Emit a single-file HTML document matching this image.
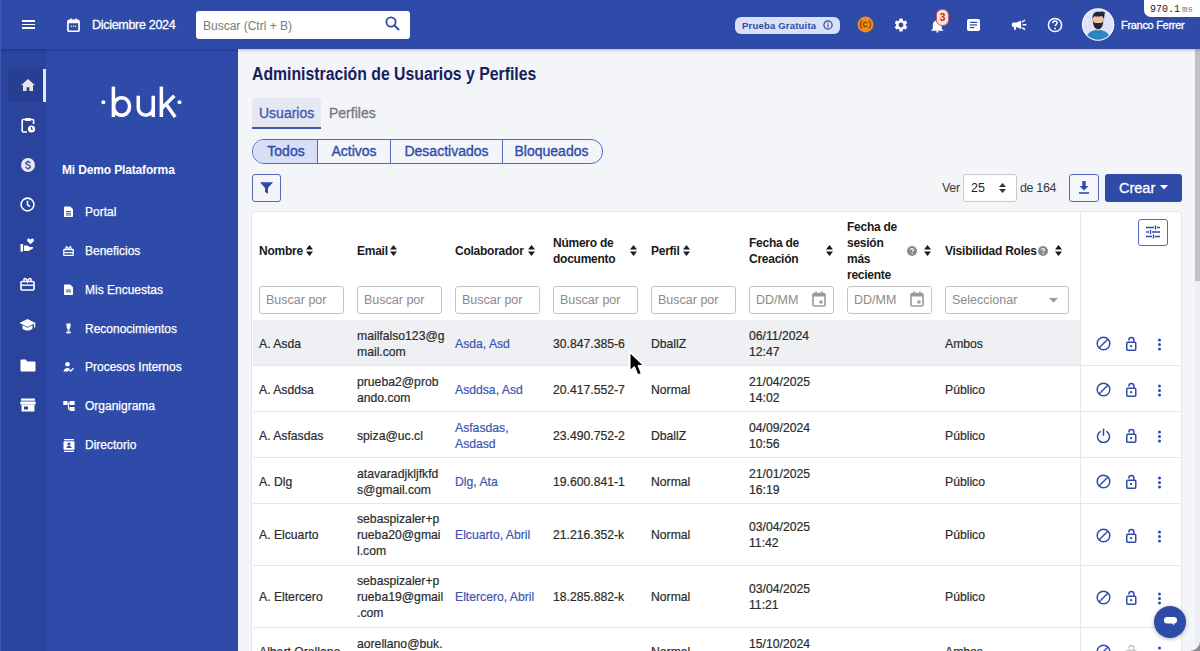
<!DOCTYPE html>
<html><head><meta charset="utf-8">
<style>
*{box-sizing:border-box;margin:0;padding:0}
html,body{width:1200px;height:651px;overflow:hidden;background:#F4F5F8;font-family:"Liberation Sans",sans-serif;color:#2b2b2b}
.abs{position:absolute}
#hdr{position:absolute;left:0;top:0;width:1200px;height:49px;background:#2F4BAA;box-shadow:0 1px 3px rgba(0,0,0,.25);z-index:5}
#rail{position:absolute;left:0;top:49px;width:46px;height:602px;background:#2A449E}
#side{position:absolute;left:46px;top:49px;width:192px;height:602px;background:#2F4BAA}
.wt{color:#fff}
.med{-webkit-text-stroke:0.3px currentColor}
svg{display:block}
</style></head><body>

<!-- HEADER -->
<div id="hdr">
  <!-- hamburger -->
  <div class="abs" style="left:21.5px;top:20px;width:13px;height:1.8px;background:#fff"></div>
  <div class="abs" style="left:21.5px;top:23.5px;width:13px;height:1.8px;background:#fff"></div>
  <div class="abs" style="left:21.5px;top:27px;width:13px;height:1.8px;background:#fff"></div>
  <!-- calendar -->
  <svg class="abs" style="left:67px;top:17.5px" width="13" height="14.3" viewBox="0 0 14 15" preserveAspectRatio="none">
    <rect x="1" y="2.5" width="12" height="11.5" rx="1.5" fill="none" stroke="#fff" stroke-width="1.8"/>
    <rect x="1" y="2.5" width="12" height="3" fill="#fff"/>
    <rect x="3.5" y="0.5" width="1.6" height="3" fill="#fff"/>
    <rect x="8.9" y="0.5" width="1.6" height="3" fill="#fff"/>
    <rect x="4" y="8" width="1.3" height="1.3" fill="#fff"/><rect x="6.4" y="8" width="1.3" height="1.3" fill="#fff"/><rect x="8.8" y="8" width="1.3" height="1.3" fill="#fff"/>
  </svg>
  <div class="abs wt" style="left:92px;top:17px;font-size:12.5px;line-height:16px;letter-spacing:-0.3px;-webkit-text-stroke:0.3px #fff">Diciembre 2024</div>
  <!-- search -->
  <div class="abs" style="left:196px;top:11px;width:214px;height:28px;background:#fff;border-radius:3px"></div>
  <div class="abs" style="left:203px;top:18.0px;font-size:12px;line-height:16px;color:#7a7a7a">Buscar (Ctrl + B)</div>
  <svg class="abs" style="left:385px;top:16px" width="15" height="15" viewBox="0 0 15 15">
    <circle cx="6" cy="6" r="4.6" fill="none" stroke="#2F4BAA" stroke-width="1.8"/>
    <line x1="9.4" y1="9.4" x2="13.5" y2="13.5" stroke="#2F4BAA" stroke-width="2" stroke-linecap="round"/>
  </svg>
  <!-- Prueba gratuita -->
  <div class="abs" style="left:735px;top:17px;width:105px;height:17px;background:#DAE0F6;border-radius:6px"></div>
  <div class="abs" style="left:742px;top:18.5px;font-size:9.5px;line-height:13px;font-weight:bold;color:#2E4AA6;letter-spacing:0.2px">Prueba Gratuita</div>
  <svg class="abs" style="left:823px;top:20px" width="10" height="10" viewBox="0 0 10 10">
    <circle cx="5" cy="5" r="4.1" fill="none" stroke="#2F4BAA" stroke-width="1.2"/>
    <rect x="4.45" y="4.2" width="1.1" height="3.3" fill="#2F4BAA"/><rect x="4.45" y="2.3" width="1.1" height="1.1" fill="#2F4BAA"/>
  </svg>
  <!-- orange -->
  <svg class="abs" style="left:857.1px;top:16px" width="17" height="17" viewBox="0 0 17 17">
    <circle cx="8.5" cy="8.5" r="7.9" fill="#F68A12"/>
    <path d="M5.2 4.6 A5 5 0 0 0 5.2 12.4" fill="none" stroke="#8C4A12" stroke-width="1.3"/>
    <path d="M11.8 4.6 A5 5 0 0 1 11.8 12.4" fill="none" stroke="#8C4A12" stroke-width="1.3"/>
    <path d="M10.3 7.2A2.2 2.2 0 1 0 10.3 9.8" fill="none" stroke="#8C4A12" stroke-width="1.5"/>
  </svg>
  <!-- gear -->
  <svg class="abs" style="left:893.4px;top:16.5px" width="16" height="16" viewBox="0 0 24 24">
    <path fill="#fff" d="M19.14 12.94c.04-.3.06-.61.06-.94 0-.32-.02-.64-.07-.94l2.03-1.58a.49.49 0 0 0 .12-.61l-1.92-3.32a.488.488 0 0 0-.59-.22l-2.39.96c-.5-.38-1.03-.7-1.62-.94l-.36-2.54a.484.484 0 0 0-.48-.41h-3.84c-.24 0-.43.17-.47.41l-.36 2.54c-.59.24-1.13.57-1.62.94l-2.39-.96c-.22-.08-.47 0-.59.22L2.74 8.87c-.12.21-.08.47.12.61l2.03 1.58c-.05.3-.09.63-.09.94s.02.64.07.94l-2.03 1.58a.49.49 0 0 0-.12.61l1.92 3.32c.12.22.37.29.59.22l2.39-.96c.5.38 1.03.7 1.62.94l.36 2.54c.05.24.24.41.48.41h3.84c.24 0 .44-.17.47-.41l.36-2.54c.59-.24 1.13-.56 1.62-.94l2.39.96c.22.08.47 0 .59-.22l1.92-3.32c.12-.22.07-.47-.12-.61l-2.01-1.58zM12 15.6c-1.98 0-3.6-1.62-3.6-3.6s1.62-3.6 3.6-3.6 3.6 1.62 3.6 3.6-1.62 3.6-3.6 3.6z"/>
  </svg>
  <!-- bell -->
  <svg class="abs" style="left:931.3px;top:18.5px" width="12.5" height="14" viewBox="0 0 14 16" preserveAspectRatio="none">
    <path fill="#fff" d="M7 15.5c.9 0 1.6-.7 1.6-1.6H5.4c0 .9.7 1.6 1.6 1.6zM12 11V7c0-2.4-1.3-4.4-3.5-4.9V1.5C8.5.7 7.8 0 7 0S5.5.7 5.5 1.5v.6C3.3 2.6 2 4.6 2 7v4l-1.6 1.6v.8h13.2v-.8L12 11z"/>
  </svg>
  <div class="abs" style="left:936px;top:9px;width:13px;height:17px;background:#FBE1DA;border:1px solid #C95A4A;border-radius:6px;font-size:10px;font-weight:bold;color:#B0301F;text-align:center;line-height:16.5px">3</div>
  <!-- doc -->
  <svg class="abs" style="left:967px;top:18.7px" width="13" height="12" viewBox="0 0 13 13" preserveAspectRatio="none">
    <rect x="0" y="0" width="13" height="13" rx="1.8" fill="#fff"/>
    <rect x="2.8" y="3" width="7.4" height="1.3" fill="#2F4BAA"/><rect x="2.8" y="5.8" width="7.4" height="1.3" fill="#2F4BAA"/><rect x="2.8" y="8.6" width="4.6" height="1.3" fill="#2F4BAA"/>
  </svg>
  <!-- megaphone -->
  <svg class="abs" style="left:1011px;top:18px" width="16" height="14" viewBox="0 0 16 14">
    <path fill="#fff" d="M3 4.6H5.2L10.2 2.6V11L5.2 9H4.9L5.1 11.8H3L2.8 9A2.2 2.2 0 0 1 3 4.6Z"/>
    <path d="M11.6 3.8L13.6 2.3M12.2 6.8H14.8M11.6 9.9L13.6 11.4" stroke="#fff" stroke-width="1.4" stroke-linecap="round"/>
  </svg>
  <!-- help -->
  <svg class="abs" style="left:1047px;top:17px" width="16" height="16" viewBox="0 0 16 16">
    <circle cx="8" cy="8" r="6.6" fill="none" stroke="#fff" stroke-width="1.5"/>
    <path d="M5.9 6.2c0-1.3 1-2.1 2.1-2.1s2.1.8 2.1 1.9c0 1.5-2 1.6-2 3.1" fill="none" stroke="#fff" stroke-width="1.5"/>
    <circle cx="8.1" cy="11.4" r=".95" fill="#fff"/>
  </svg>
  <!-- avatar -->
  <svg class="abs" style="left:1081px;top:8px" width="34" height="34" viewBox="0 0 34 34">
    <defs><clipPath id="av"><circle cx="17.1" cy="16.5" r="15.2"/></clipPath></defs>
    <circle cx="17.1" cy="16.5" r="16.2" fill="#fff"/>
    <circle cx="17.1" cy="16.5" r="15.2" fill="#DEE4F5"/>
    <g clip-path="url(#av)">
      <path d="M4.5 34C5 26.5 8.5 22.3 17.1 21.8 25.7 22.3 29.2 26.5 29.7 34z" fill="#2C85C5"/>
      <path d="M14.5 22.2l2.6 2.6 2.6-2.6" fill="none" stroke="#1F6FA8" stroke-width=".8"/>
      <rect x="15.1" y="18.5" width="4" height="4" fill="#E5AE88"/>
      <circle cx="11.9" cy="12.3" r="1.3" fill="#F0BE9A"/><circle cx="22.3" cy="12.3" r="1.3" fill="#F0BE9A"/>
      <ellipse cx="17.1" cy="12.2" rx="5" ry="5.9" fill="#F2C3A0"/>
      <path d="M12 12.2C12 18.5 14 21 17.1 21S22.2 18.5 22.2 12.2C21.6 14.3 20.6 15.3 19.6 14.9H14.6C13.6 15.3 12.6 14.3 12 12.2z" fill="#1D2838"/>
      <path d="M11.7 11.2C11.1 6.3 13.4 3.6 17.4 3.8 19.4 3.6 21 4 22 3l.7 1.5 1.8-.8-1 2.3c.1 2-.3 3.9-.8 5.2-.5-1.8-1.1-2.8-2-3.3-2 .8-5.3.8-7.3.3-.8.7-1.3 1.8-1.7 3z" fill="#1D2838"/>
    </g>
  </svg>
  <div class="abs wt" style="left:1121px;top:18px;font-size:11px;line-height:14px;letter-spacing:-0.3px;-webkit-text-stroke:0.3px #fff">Franco Ferrer</div>
  <!-- ms overlay -->
  <div class="abs" style="left:1144px;top:0;width:56px;height:17px;background:#fff;border-bottom-left-radius:7px"></div>
  <div class="abs" style="left:1150px;top:2.7px;font-family:'Liberation Mono',monospace;font-size:10px;line-height:13px;color:#222">970.1<span style="font-size:9px;color:#777;margin-left:2px">ms</span></div>
</div>


<!-- RAIL -->
<div id="rail">
  <div class="abs" style="left:8px;top:20px;width:35px;height:33px;background:#263F93"></div>
  <div class="abs" style="left:43px;top:20px;width:3px;height:33px;background:#E8E8EE"></div>
</div>
<!-- rail icons -->
<svg class="abs" style="left:21px;top:79px" width="14" height="12" viewBox="0 0 14 12"><path fill="#E6E6EA" d="M7 0L0 6.2h2V12h3.6V8.2h2.8V12H12V6.2h2z"/></svg>
<svg class="abs" style="left:21px;top:117px" width="14" height="16" viewBox="0 0 14 16"><path d="M4 2.5H2.2c-.6 0-1 .4-1 1v10.5c0 .6.4 1 1 1H6" fill="none" stroke="#fff" stroke-width="1.6"/><path d="M10 2.5h1.6c.6 0 1 .4 1 1V7" fill="none" stroke="#fff" stroke-width="1.6"/><rect x="4" y="1" width="6" height="3" rx=".8" fill="#fff"/><circle cx="10.5" cy="12" r="3.6" fill="#fff"/><path d="M10.5 10v2.3h1.6" fill="none" stroke="#2A449E" stroke-width="1.1"/></svg>
<svg class="abs" style="left:21px;top:158px" width="14" height="14" viewBox="0 0 14 14"><circle cx="7" cy="7" r="7" fill="#E9E9EE"/><path d="M9.2 5.2C9.1 4.3 8.2 3.8 7 3.8S4.8 4.4 4.8 5.3c0 2 4.5 1.3 4.5 3.4 0 1-1 1.6-2.3 1.6S4.7 9.7 4.6 8.8" fill="none" stroke="#2A449E" stroke-width="1.3"/><path d="M7 2.5v1.5M7 10.2v1.4" stroke="#2A449E" stroke-width="1.3"/></svg>
<svg class="abs" style="left:20px;top:197px" width="15" height="15" viewBox="0 0 15 15"><circle cx="7.5" cy="7.5" r="6.4" fill="none" stroke="#fff" stroke-width="1.6"/><path d="M7.5 3.8v4l2.6 1.8" fill="none" stroke="#fff" stroke-width="1.5"/></svg>
<svg class="abs" style="left:20px;top:237px" width="16" height="15" viewBox="0 0 16 15"><rect x="0.5" y="7" width="2.6" height="7.5" fill="#fff"/><path d="M4 8.5h3.5l2.3 1.4H12c1 0 1.5.6 1.3 1.3L8.5 14H4z" fill="#fff"/><path d="M10.5 7.2L7.6 4.4C6.6 3.4 7.2 1.6 8.6 1.6c.8 0 1.4.5 1.9 1.1.5-.6 1.1-1.1 1.9-1.1 1.4 0 2 1.8 1 2.8z" fill="#fff"/></svg>
<svg class="abs" style="left:20px;top:277px" width="15" height="14" viewBox="0 0 15 14"><rect x="1" y="4.5" width="13" height="8.5" rx="1" fill="none" stroke="#fff" stroke-width="1.6"/><path d="M1 8.2h13" stroke="#fff" stroke-width="1.4"/><path d="M4.5 4.5c-1-1-1-3 .5-3 1.3 0 2.2 2 2.5 3 .3-1 1.2-3 2.5-3 1.5 0 1.5 2 .5 3" fill="none" stroke="#fff" stroke-width="1.4"/></svg>
<svg class="abs" style="left:19px;top:318px" width="17" height="14" viewBox="0 0 17 14"><path d="M8.5 1L0.5 5l8 4 8-4z" fill="#fff"/><path d="M3.5 7.2v3.2c1.4 1.4 3.2 2 5 2s3.6-.6 5-2V7.2L8.5 9.7z" fill="#fff"/><rect x="15" y="5" width="1.2" height="4.5" fill="#fff"/></svg>
<svg class="abs" style="left:20px;top:359px" width="16" height="13" viewBox="0 0 16 13"><path d="M0.5 1.6c0-.6.4-1 1-1h4.2l1.6 1.8h7.2c.6 0 1 .4 1 1v8.2c0 .6-.4 1-1 1H1.5c-.6 0-1-.4-1-1z" fill="#fff"/></svg>
<svg class="abs" style="left:20px;top:398px" width="16" height="14" viewBox="0 0 16 14"><rect x="1" y="0.5" width="14" height="2.2" fill="#fff"/><path d="M0.5 3.5h15l.3 3H.2z" fill="#fff"/><rect x="1.5" y="6.5" width="13" height="7" fill="#fff"/><rect x="4" y="8.5" width="4" height="3" fill="#2A449E"/></svg>

<!-- SIDEBAR -->
<div id="side"></div>
<svg class="abs" style="left:98px;top:84px" width="88" height="36" viewBox="0 0 88 36">
  <circle cx="5.4" cy="18.2" r="2" fill="#fff"/>
  <path d="M15.4 2.6V33" stroke="#fff" stroke-width="3.5"/>
  <ellipse cx="23.6" cy="22.5" rx="8" ry="8.8" fill="none" stroke="#fff" stroke-width="3.5"/>
  <path d="M40.25 11.8v12a7.5 7.5 0 0 0 15 0v-12M55.25 23v10" fill="none" stroke="#fff" stroke-width="3.5"/>
  <path d="M63.35 2.6V33" stroke="#fff" stroke-width="3.5"/>
  <path d="M63.5 24.5L76.3 11.8M68 20l9.2 13" fill="none" stroke="#fff" stroke-width="3.5"/>
  <circle cx="81.5" cy="18.2" r="2" fill="#fff"/>
</svg>
<div class="abs wt" style="left:62px;top:163px;font-size:12px;line-height:15px;font-weight:bold;letter-spacing:-0.15px">Mi Demo Plataforma</div>
<svg class="abs" style="left:63px;top:206px" width="11" height="11" viewBox="0 0 11 11"><path d="M1 1.2c0-.4.3-.7.7-.7h5.5L10 3.3v7c0 .4-.3.7-.7.7H1.7c-.4 0-.7-.3-.7-.7z" fill="#fff"/><path d="M3 5.5h5M3 7.3h5M3 9h5" stroke="#2F4BAA" stroke-width=".9"/></svg>
<div class="abs wt" style="left:85px;top:204px;font-size:12px;line-height:16px;-webkit-text-stroke:0.25px #fff">Portal</div>
<svg class="abs" style="left:63px;top:245px" width="11" height="11" viewBox="0 0 11 11"><rect x=".8" y="4.5" width="9.4" height="6" rx=".6" fill="none" stroke="#fff" stroke-width="1.3"/><path d="M.8 7.6h9.4" stroke="#fff" stroke-width="1.2"/><path d="M2.5 4.5l1-2.8 2 2 2-2 1 2.8" fill="none" stroke="#fff" stroke-width="1.2"/></svg>
<div class="abs wt" style="left:85px;top:243px;font-size:12px;line-height:16px;-webkit-text-stroke:0.25px #fff">Beneficios</div>
<svg class="abs" style="left:63px;top:284px" width="11" height="11" viewBox="0 0 11 11"><path d="M1 1.2c0-.4.3-.7.7-.7h5.5L10 3.3v7c0 .4-.3.7-.7.7H1.7c-.4 0-.7-.3-.7-.7z" fill="#fff"/><path d="M3 6h5M3 7.8h5" stroke="#2F4BAA" stroke-width=".9"/></svg>
<div class="abs wt" style="left:85px;top:282px;font-size:12px;line-height:16px;-webkit-text-stroke:0.25px #fff">Mis Encuestas</div>
<svg class="abs" style="left:63px;top:323px" width="11" height="11" viewBox="0 0 11 11"><path d="M3.3 .5h4.4L7.3 4.5c-.2 1.1-1 1.7-1.8 1.8-.8-.1-1.6-.7-1.8-1.8z" fill="#fff"/><rect x="4.7" y="6.2" width="1.6" height="2.3" fill="#fff"/><rect x="3.3" y="8.6" width="4.4" height="1.8" fill="#fff"/></svg>
<div class="abs wt" style="left:85px;top:321px;font-size:12px;line-height:16px;-webkit-text-stroke:0.25px #fff">Reconocimientos</div>
<svg class="abs" style="left:63px;top:361px" width="11" height="11" viewBox="0 0 11 11"><circle cx="4.5" cy="3.2" r="2.3" fill="#fff"/><path d="M.5 10.5c.3-2.4 2-3.6 4-3.6 1 0 1.8.2 2.4.6L5 10.5z" fill="#fff"/><path d="M6.3 8.8l1.4 1.3 2.8-2.9" fill="none" stroke="#fff" stroke-width="1.3"/></svg>
<div class="abs wt" style="left:85px;top:359px;font-size:12px;line-height:16px;-webkit-text-stroke:0.25px #fff">Procesos Internos</div>
<svg class="abs" style="left:63px;top:400px" width="12" height="12" viewBox="0 0 12 12"><rect x=".3" y="1" width="4.2" height="4" fill="#fff"/><rect x="6.6" y="1" width="5" height="4" fill="#fff"/><rect x="6.6" y="7" width="5" height="4" fill="#fff"/><path d="M4.5 3h2.1M5.5 3v6h1.1" fill="none" stroke="#fff" stroke-width="1.1"/></svg>
<div class="abs wt" style="left:85px;top:398px;font-size:12px;line-height:16px;-webkit-text-stroke:0.25px #fff">Organigrama</div>
<svg class="abs" style="left:63px;top:438.5px" width="12" height="13" viewBox="0 0 12 13"><rect x="1" y="0" width="10" height="1.3" fill="#fff"/><rect x="1" y="11.7" width="10" height="1.3" fill="#fff"/><rect x=".5" y="2.2" width="11" height="8.6" rx=".8" fill="#fff"/><circle cx="6" cy="5" r="1.6" fill="#2F4BAA"/><path d="M3.3 9c.3-1.4 1.3-2 2.7-2s2.4.6 2.7 2z" fill="#2F4BAA"/></svg>
<div class="abs wt" style="left:85px;top:437px;font-size:12px;line-height:16px;-webkit-text-stroke:0.25px #fff">Directorio</div>


<!-- MAIN -->
<div class="abs" style="left:238px;top:49px;width:962px;height:602px;background:#F4F5F8"></div>
<div class="abs" style="left:252px;top:63px;font-size:18px;line-height:22px;font-weight:bold;color:#16215C;transform:scaleX(0.877);transform-origin:0 0;white-space:nowrap">Administración de Usuarios y Perfiles</div>
<!-- tabs -->
<div class="abs" style="left:252px;top:98px;width:69px;height:31px;background:#E5E8F2;border-radius:4px 4px 0 0;border-bottom:2.5px solid #3D56B0"></div>
<div class="abs" style="left:259px;top:104px;font-size:14px;line-height:18px;color:#3D56B0;-webkit-text-stroke:0.3px #3D56B0">Usuarios</div>
<div class="abs" style="left:329px;top:104px;font-size:14px;line-height:18px;color:#777;-webkit-text-stroke:0.3px #777">Perfiles</div>
<!-- segmented -->
<div class="abs" style="left:252px;top:139px;width:351px;height:25px;border:1px solid #5468BC;border-radius:12px;overflow:hidden;display:flex;font-size:14px;color:#2F4BAA;-webkit-text-stroke:0.35px #2F4BAA">
  <div style="width:65px;background:#D7DEF6;border-right:1px solid #5468BC;text-align:center;line-height:23px;padding-left:2px">Todos</div>
  <div style="width:73px;border-right:1px solid #5468BC;text-align:center;line-height:23px">Activos</div>
  <div style="width:112px;border-right:1px solid #5468BC;text-align:center;line-height:23px">Desactivados</div>
  <div style="flex:1;text-align:center;line-height:23px;padding-right:2px">Bloqueados</div>
</div>
<!-- filter btn -->
<div class="abs" style="left:252px;top:174px;width:29px;height:28px;border:1px solid #5468BC;border-radius:3px;background:#F4F5F8"></div>
<svg class="abs" style="left:260px;top:182px" width="13" height="12" viewBox="0 0 13 12"><path d="M0 .2h13L8 6v5.8L5 10V6z" fill="#2F4BAA"/></svg>
<!-- ver -->
<div class="abs" style="left:942px;top:180px;font-size:12.5px;line-height:16px;color:#3a3a3a;letter-spacing:-0.3px">Ver</div>
<div class="abs" style="left:963px;top:174px;width:54px;height:28px;background:#fff;border:1px solid #C9C9C9;border-radius:3px"></div>
<div class="abs" style="left:971px;top:180px;font-size:12.5px;line-height:16px;color:#222">25</div>
<svg class="abs" style="left:999px;top:183px" width="7" height="10" viewBox="0 0 7 10"><path d="M3.5 0L7 4H0zM3.5 10L0 6h7z" fill="#333"/></svg>
<div class="abs" style="left:1020px;top:180px;font-size:12.5px;line-height:16px;color:#3a3a3a;letter-spacing:-0.35px">de 164</div>
<div class="abs" style="left:1069px;top:174px;width:30px;height:28px;border:1px solid #5468BC;border-radius:3px;background:#F6F7FB"></div>
<svg class="abs" style="left:1078px;top:181px" width="12" height="13" viewBox="0 0 12 13"><path d="M4.3 0h3.4v5h2.8L6 9.5 1.5 5h2.8z" fill="#2F4BAA"/><rect x="1" y="11.2" width="10" height="1.6" fill="#2F4BAA"/></svg>
<div class="abs" style="left:1105px;top:174px;width:77px;height:28px;background:#2F4BAA;border-radius:3px"></div>
<div class="abs wt" style="left:1119px;top:179px;font-size:14.5px;line-height:18px;-webkit-text-stroke:0.3px #fff">Crear</div>
<svg class="abs" style="left:1160px;top:185px" width="8" height="5" viewBox="0 0 8 5"><path d="M0 0h8L4 4.5z" fill="#fff"/></svg>


<!-- TABLE CARD -->
<div class="abs" style="left:251px;top:211px;width:931px;height:451px;background:#fff;border:1px solid #E4E5E8;border-radius:4px"></div>
<div class="abs" style="left:259px;top:243px;font-size:12px;line-height:16px;font-weight:bold;color:#1a1a1a;letter-spacing:-0.25px">Nombre</div>
<svg class="abs" style="left:306px;top:245px" width="7" height="11" viewBox="0 0 7 11"><path d="M3.5 0L7 4.4H0zM3.5 11L0 6.6h7z" fill="#1a1a1a"/></svg><div class="abs" style="left:357px;top:243px;font-size:12px;line-height:16px;font-weight:bold;color:#1a1a1a;letter-spacing:-0.25px">Email</div>
<svg class="abs" style="left:390px;top:245px" width="7" height="11" viewBox="0 0 7 11"><path d="M3.5 0L7 4.4H0zM3.5 11L0 6.6h7z" fill="#1a1a1a"/></svg><div class="abs" style="left:455px;top:243px;font-size:12px;line-height:16px;font-weight:bold;color:#1a1a1a;letter-spacing:-0.25px">Colaborador</div>
<svg class="abs" style="left:527.5px;top:245px" width="7" height="11" viewBox="0 0 7 11"><path d="M3.5 0L7 4.4H0zM3.5 11L0 6.6h7z" fill="#1a1a1a"/></svg><div class="abs" style="left:553px;top:235px;font-size:12px;line-height:16px;font-weight:bold;color:#1a1a1a;letter-spacing:-0.25px">Número de<br>documento</div>
<svg class="abs" style="left:630px;top:245px" width="7" height="11" viewBox="0 0 7 11"><path d="M3.5 0L7 4.4H0zM3.5 11L0 6.6h7z" fill="#1a1a1a"/></svg><div class="abs" style="left:651px;top:243px;font-size:12px;line-height:16px;font-weight:bold;color:#1a1a1a;letter-spacing:-0.25px">Perfil</div>
<svg class="abs" style="left:683px;top:245px" width="7" height="11" viewBox="0 0 7 11"><path d="M3.5 0L7 4.4H0zM3.5 11L0 6.6h7z" fill="#1a1a1a"/></svg><div class="abs" style="left:749px;top:235px;font-size:12px;line-height:16px;font-weight:bold;color:#1a1a1a;letter-spacing:-0.25px">Fecha de<br>Creación</div>
<svg class="abs" style="left:826px;top:245px" width="7" height="11" viewBox="0 0 7 11"><path d="M3.5 0L7 4.4H0zM3.5 11L0 6.6h7z" fill="#1a1a1a"/></svg><div class="abs" style="left:847px;top:219px;font-size:12px;line-height:16px;font-weight:bold;color:#1a1a1a;letter-spacing:-0.25px">Fecha de<br>sesión<br>más<br>reciente</div>
<svg class="abs" style="left:907px;top:246px" width="10" height="10" viewBox="0 0 10 10"><circle cx="5" cy="5" r="5" fill="#8a8a8a"/><path d="M3.5 3.9c0-.9.7-1.4 1.5-1.4s1.5.5 1.5 1.3c0 1-1.3 1-1.3 2" fill="none" stroke="#fff" stroke-width="1.1"/><circle cx="5.2" cy="7.6" r=".65" fill="#fff"/></svg><svg class="abs" style="left:924px;top:245px" width="7" height="11" viewBox="0 0 7 11"><path d="M3.5 0L7 4.4H0zM3.5 11L0 6.6h7z" fill="#1a1a1a"/></svg><div class="abs" style="left:945px;top:243px;font-size:12px;line-height:16px;font-weight:bold;color:#1a1a1a;letter-spacing:-0.25px">Visibilidad Roles</div>
<svg class="abs" style="left:1038px;top:246px" width="10" height="10" viewBox="0 0 10 10"><circle cx="5" cy="5" r="5" fill="#8a8a8a"/><path d="M3.5 3.9c0-.9.7-1.4 1.5-1.4s1.5.5 1.5 1.3c0 1-1.3 1-1.3 2" fill="none" stroke="#fff" stroke-width="1.1"/><circle cx="5.2" cy="7.6" r=".65" fill="#fff"/></svg><svg class="abs" style="left:1055px;top:245px" width="7" height="11" viewBox="0 0 7 11"><path d="M3.5 0L7 4.4H0zM3.5 11L0 6.6h7z" fill="#1a1a1a"/></svg><div class="abs" style="left:259px;top:286px;width:85px;height:28px;border:1px solid #C4C4C4;border-radius:3px;background:#fff"></div><div class="abs" style="left:266px;top:292px;font-size:12.5px;line-height:16px;color:#8a8a8a">Buscar por</div>
<div class="abs" style="left:357px;top:286px;width:85px;height:28px;border:1px solid #C4C4C4;border-radius:3px;background:#fff"></div><div class="abs" style="left:364px;top:292px;font-size:12.5px;line-height:16px;color:#8a8a8a">Buscar por</div>
<div class="abs" style="left:455px;top:286px;width:85px;height:28px;border:1px solid #C4C4C4;border-radius:3px;background:#fff"></div><div class="abs" style="left:462px;top:292px;font-size:12.5px;line-height:16px;color:#8a8a8a">Buscar por</div>
<div class="abs" style="left:553px;top:286px;width:85px;height:28px;border:1px solid #C4C4C4;border-radius:3px;background:#fff"></div><div class="abs" style="left:560px;top:292px;font-size:12.5px;line-height:16px;color:#8a8a8a">Buscar por</div>
<div class="abs" style="left:651px;top:286px;width:85px;height:28px;border:1px solid #C4C4C4;border-radius:3px;background:#fff"></div><div class="abs" style="left:658px;top:292px;font-size:12.5px;line-height:16px;color:#8a8a8a">Buscar por</div>
<div class="abs" style="left:749px;top:286px;width:85px;height:28px;border:1px solid #C4C4C4;border-radius:3px;background:#fff"></div><div class="abs" style="left:756px;top:292px;font-size:12.5px;line-height:16px;color:#8a8a8a">DD/MM</div>
<svg class="abs" style="left:812px;top:291px" width="14" height="16" viewBox="0 0 14 16"><rect x="1" y="2.5" width="12" height="12.5" rx="1.2" fill="none" stroke="#9a9a9a" stroke-width="1.6"/><rect x="1" y="2.5" width="12" height="3" fill="#9a9a9a"/><rect x="3.2" y="0.5" width="1.6" height="3" fill="#9a9a9a"/><rect x="9.2" y="0.5" width="1.6" height="3" fill="#9a9a9a"/><rect x="7.5" y="9.5" width="3" height="3" fill="#9a9a9a"/></svg><div class="abs" style="left:847px;top:286px;width:85px;height:28px;border:1px solid #C4C4C4;border-radius:3px;background:#fff"></div><div class="abs" style="left:854px;top:292px;font-size:12.5px;line-height:16px;color:#8a8a8a">DD/MM</div>
<svg class="abs" style="left:910px;top:291px" width="14" height="16" viewBox="0 0 14 16"><rect x="1" y="2.5" width="12" height="12.5" rx="1.2" fill="none" stroke="#9a9a9a" stroke-width="1.6"/><rect x="1" y="2.5" width="12" height="3" fill="#9a9a9a"/><rect x="3.2" y="0.5" width="1.6" height="3" fill="#9a9a9a"/><rect x="9.2" y="0.5" width="1.6" height="3" fill="#9a9a9a"/><rect x="7.5" y="9.5" width="3" height="3" fill="#9a9a9a"/></svg><div class="abs" style="left:945px;top:286px;width:124px;height:28px;border:1px solid #C4C4C4;border-radius:3px;background:#fff"></div><div class="abs" style="left:952px;top:292px;font-size:12.5px;line-height:16px;color:#8a8a8a">Seleccionar</div>
<svg class="abs" style="left:1049px;top:298px" width="9" height="5" viewBox="0 0 9 5"><path d="M0 0h9L4.5 4.5z" fill="#9a9a9a"/></svg><div class="abs" style="left:1080px;top:213px;width:1px;height:440px;background:#E6E7EA"></div><div class="abs" style="left:1138px;top:219px;width:30px;height:27px;border:1px solid #5468BC;border-radius:3px;background:#fff"></div><svg class="abs" style="left:1146px;top:225px" width="14" height="14" viewBox="0 0 14 14"><path d="M0 2.5h8M11 2.5h3M0 7h3M6 7h8M0 11.5h6M9 11.5h5M9.5 0.5v4M4.5 5v4M7.5 9.5v4" stroke="#2F4BAA" stroke-width="1.4"/></svg><div class="abs" style="left:253px;top:320px;width:827px;height:46px;background:#EEF0F3"></div><div class="abs" style="left:253px;top:365px;width:927px;height:1px;background:#E6E7EA"></div><div class="abs" style="left:259px;top:336.0px;font-size:12.2px;line-height:16px;color:#2b2b2b;white-space:nowrap;-webkit-text-stroke:0.2px currentColor">A. Asda</div>
<div class="abs" style="left:357px;top:328.0px;font-size:12.2px;line-height:16px;color:#2b2b2b;white-space:nowrap;-webkit-text-stroke:0.2px currentColor">mailfalso123@g<br>mail.com</div>
<div class="abs" style="left:455px;top:336.0px;font-size:12.2px;line-height:16px;color:#3D56B0;white-space:nowrap;-webkit-text-stroke:0.2px currentColor">Asda, Asd</div>
<div class="abs" style="left:553px;top:336.0px;font-size:12.2px;line-height:16px;color:#2b2b2b;white-space:nowrap;-webkit-text-stroke:0.2px currentColor">30.847.385-6</div>
<div class="abs" style="left:651px;top:336.0px;font-size:12.2px;line-height:16px;color:#2b2b2b;white-space:nowrap;-webkit-text-stroke:0.2px currentColor">DballZ</div>
<div class="abs" style="left:749px;top:328.0px;font-size:12.2px;line-height:16px;color:#2b2b2b;white-space:nowrap;-webkit-text-stroke:0.2px currentColor">06/11/2024<br>12:47</div>
<div class="abs" style="left:945px;top:336.0px;font-size:12.2px;line-height:16px;color:#2b2b2b;white-space:nowrap;-webkit-text-stroke:0.2px currentColor">Ambos</div>
<svg class="abs" style="left:1096px;top:335.8px" width="15" height="15" viewBox="0 0 15 15"><circle cx="7.5" cy="7.5" r="6.3" fill="none" stroke="#2F4BAA" stroke-width="1.5"/><path d="M3 12L12 3" stroke="#2F4BAA" stroke-width="1.5"/></svg><svg class="abs" style="left:1125px;top:335.5px" width="13" height="15" viewBox="0 0 13 15"><path d="M3.9 4.6V3.9A2.5 2.5 0 0 1 8.9 3.9V6.4" fill="none" stroke="#2F4BAA" stroke-width="1.5"/><rect x="1.75" y="6.35" width="9" height="7.8" rx="1" fill="none" stroke="#2F4BAA" stroke-width="1.5"/><circle cx="6.1" cy="10.2" r="1.15" fill="#2F4BAA"/></svg><svg class="abs" style="left:1157px;top:337.8px" width="5" height="13" viewBox="0 0 5 13"><circle cx="2.5" cy="2" r="1.5" fill="#2F4BAA"/><circle cx="2.5" cy="6.5" r="1.5" fill="#2F4BAA"/><circle cx="2.5" cy="11" r="1.5" fill="#2F4BAA"/></svg>
<div class="abs" style="left:253px;top:411px;width:927px;height:1px;background:#E6E7EA"></div><div class="abs" style="left:259px;top:382.0px;font-size:12.2px;line-height:16px;color:#2b2b2b;white-space:nowrap;-webkit-text-stroke:0.2px currentColor">A. Asddsa</div>
<div class="abs" style="left:357px;top:374.0px;font-size:12.2px;line-height:16px;color:#2b2b2b;white-space:nowrap;-webkit-text-stroke:0.2px currentColor">prueba2@prob<br>ando.com</div>
<div class="abs" style="left:455px;top:382.0px;font-size:12.2px;line-height:16px;color:#3D56B0;white-space:nowrap;-webkit-text-stroke:0.2px currentColor">Asddsa, Asd</div>
<div class="abs" style="left:553px;top:382.0px;font-size:12.2px;line-height:16px;color:#2b2b2b;white-space:nowrap;-webkit-text-stroke:0.2px currentColor">20.417.552-7</div>
<div class="abs" style="left:651px;top:382.0px;font-size:12.2px;line-height:16px;color:#2b2b2b;white-space:nowrap;-webkit-text-stroke:0.2px currentColor">Normal</div>
<div class="abs" style="left:749px;top:374.0px;font-size:12.2px;line-height:16px;color:#2b2b2b;white-space:nowrap;-webkit-text-stroke:0.2px currentColor">21/04/2025<br>14:02</div>
<div class="abs" style="left:945px;top:382.0px;font-size:12.2px;line-height:16px;color:#2b2b2b;white-space:nowrap;-webkit-text-stroke:0.2px currentColor">Público</div>
<svg class="abs" style="left:1096px;top:381.8px" width="15" height="15" viewBox="0 0 15 15"><circle cx="7.5" cy="7.5" r="6.3" fill="none" stroke="#2F4BAA" stroke-width="1.5"/><path d="M3 12L12 3" stroke="#2F4BAA" stroke-width="1.5"/></svg><svg class="abs" style="left:1125px;top:381.5px" width="13" height="15" viewBox="0 0 13 15"><path d="M3.9 4.6V3.9A2.5 2.5 0 0 1 8.9 3.9V6.4" fill="none" stroke="#2F4BAA" stroke-width="1.5"/><rect x="1.75" y="6.35" width="9" height="7.8" rx="1" fill="none" stroke="#2F4BAA" stroke-width="1.5"/><circle cx="6.1" cy="10.2" r="1.15" fill="#2F4BAA"/></svg><svg class="abs" style="left:1157px;top:383.8px" width="5" height="13" viewBox="0 0 5 13"><circle cx="2.5" cy="2" r="1.5" fill="#2F4BAA"/><circle cx="2.5" cy="6.5" r="1.5" fill="#2F4BAA"/><circle cx="2.5" cy="11" r="1.5" fill="#2F4BAA"/></svg>
<div class="abs" style="left:253px;top:457px;width:927px;height:1px;background:#E6E7EA"></div><div class="abs" style="left:259px;top:428.0px;font-size:12.2px;line-height:16px;color:#2b2b2b;white-space:nowrap;-webkit-text-stroke:0.2px currentColor">A. Asfasdas</div>
<div class="abs" style="left:357px;top:428.0px;font-size:12.2px;line-height:16px;color:#2b2b2b;white-space:nowrap;-webkit-text-stroke:0.2px currentColor">spiza@uc.cl</div>
<div class="abs" style="left:455px;top:420.0px;font-size:12.2px;line-height:16px;color:#3D56B0;white-space:nowrap;-webkit-text-stroke:0.2px currentColor">Asfasdas,<br>Asdasd</div>
<div class="abs" style="left:553px;top:428.0px;font-size:12.2px;line-height:16px;color:#2b2b2b;white-space:nowrap;-webkit-text-stroke:0.2px currentColor">23.490.752-2</div>
<div class="abs" style="left:651px;top:428.0px;font-size:12.2px;line-height:16px;color:#2b2b2b;white-space:nowrap;-webkit-text-stroke:0.2px currentColor">DballZ</div>
<div class="abs" style="left:749px;top:420.0px;font-size:12.2px;line-height:16px;color:#2b2b2b;white-space:nowrap;-webkit-text-stroke:0.2px currentColor">04/09/2024<br>10:56</div>
<div class="abs" style="left:945px;top:428.0px;font-size:12.2px;line-height:16px;color:#2b2b2b;white-space:nowrap;-webkit-text-stroke:0.2px currentColor">Público</div>
<svg class="abs" style="left:1096px;top:427.8px" width="15" height="15" viewBox="0 0 15 15"><path d="M4.2 3.6a6 6 0 1 0 6.6 0" fill="none" stroke="#2F4BAA" stroke-width="1.5" stroke-linecap="round"/><path d="M7.5 1.3v6" stroke="#2F4BAA" stroke-width="1.5" stroke-linecap="round"/></svg><svg class="abs" style="left:1125px;top:427.5px" width="13" height="15" viewBox="0 0 13 15"><path d="M3.9 4.6V3.9A2.5 2.5 0 0 1 8.9 3.9V6.4" fill="none" stroke="#2F4BAA" stroke-width="1.5"/><rect x="1.75" y="6.35" width="9" height="7.8" rx="1" fill="none" stroke="#2F4BAA" stroke-width="1.5"/><circle cx="6.1" cy="10.2" r="1.15" fill="#2F4BAA"/></svg><svg class="abs" style="left:1157px;top:429.8px" width="5" height="13" viewBox="0 0 5 13"><circle cx="2.5" cy="2" r="1.5" fill="#2F4BAA"/><circle cx="2.5" cy="6.5" r="1.5" fill="#2F4BAA"/><circle cx="2.5" cy="11" r="1.5" fill="#2F4BAA"/></svg>
<div class="abs" style="left:253px;top:503px;width:927px;height:1px;background:#E6E7EA"></div><div class="abs" style="left:259px;top:474.0px;font-size:12.2px;line-height:16px;color:#2b2b2b;white-space:nowrap;-webkit-text-stroke:0.2px currentColor">A. Dlg</div>
<div class="abs" style="left:357px;top:466.0px;font-size:12.2px;line-height:16px;color:#2b2b2b;white-space:nowrap;-webkit-text-stroke:0.2px currentColor">atavaradjkljfkfd<br>s@gmail.com</div>
<div class="abs" style="left:455px;top:474.0px;font-size:12.2px;line-height:16px;color:#3D56B0;white-space:nowrap;-webkit-text-stroke:0.2px currentColor">Dlg, Ata</div>
<div class="abs" style="left:553px;top:474.0px;font-size:12.2px;line-height:16px;color:#2b2b2b;white-space:nowrap;-webkit-text-stroke:0.2px currentColor">19.600.841-1</div>
<div class="abs" style="left:651px;top:474.0px;font-size:12.2px;line-height:16px;color:#2b2b2b;white-space:nowrap;-webkit-text-stroke:0.2px currentColor">Normal</div>
<div class="abs" style="left:749px;top:466.0px;font-size:12.2px;line-height:16px;color:#2b2b2b;white-space:nowrap;-webkit-text-stroke:0.2px currentColor">21/01/2025<br>16:19</div>
<div class="abs" style="left:945px;top:474.0px;font-size:12.2px;line-height:16px;color:#2b2b2b;white-space:nowrap;-webkit-text-stroke:0.2px currentColor">Público</div>
<svg class="abs" style="left:1096px;top:473.8px" width="15" height="15" viewBox="0 0 15 15"><circle cx="7.5" cy="7.5" r="6.3" fill="none" stroke="#2F4BAA" stroke-width="1.5"/><path d="M3 12L12 3" stroke="#2F4BAA" stroke-width="1.5"/></svg><svg class="abs" style="left:1125px;top:473.5px" width="13" height="15" viewBox="0 0 13 15"><path d="M3.9 4.6V3.9A2.5 2.5 0 0 1 8.9 3.9V6.4" fill="none" stroke="#2F4BAA" stroke-width="1.5"/><rect x="1.75" y="6.35" width="9" height="7.8" rx="1" fill="none" stroke="#2F4BAA" stroke-width="1.5"/><circle cx="6.1" cy="10.2" r="1.15" fill="#2F4BAA"/></svg><svg class="abs" style="left:1157px;top:475.8px" width="5" height="13" viewBox="0 0 5 13"><circle cx="2.5" cy="2" r="1.5" fill="#2F4BAA"/><circle cx="2.5" cy="6.5" r="1.5" fill="#2F4BAA"/><circle cx="2.5" cy="11" r="1.5" fill="#2F4BAA"/></svg>
<div class="abs" style="left:253px;top:565px;width:927px;height:1px;background:#E6E7EA"></div><div class="abs" style="left:259px;top:527.0px;font-size:12.2px;line-height:16px;color:#2b2b2b;white-space:nowrap;-webkit-text-stroke:0.2px currentColor">A. Elcuarto</div>
<div class="abs" style="left:357px;top:511.0px;font-size:12.2px;line-height:16px;color:#2b2b2b;white-space:nowrap;-webkit-text-stroke:0.2px currentColor">sebaspizaler+p<br>rueba20@gmai<br>l.com</div>
<div class="abs" style="left:455px;top:527.0px;font-size:12.2px;line-height:16px;color:#3D56B0;white-space:nowrap;-webkit-text-stroke:0.2px currentColor">Elcuarto, Abril</div>
<div class="abs" style="left:553px;top:527.0px;font-size:12.2px;line-height:16px;color:#2b2b2b;white-space:nowrap;-webkit-text-stroke:0.2px currentColor">21.216.352-k</div>
<div class="abs" style="left:651px;top:527.0px;font-size:12.2px;line-height:16px;color:#2b2b2b;white-space:nowrap;-webkit-text-stroke:0.2px currentColor">Normal</div>
<div class="abs" style="left:749px;top:519.0px;font-size:12.2px;line-height:16px;color:#2b2b2b;white-space:nowrap;-webkit-text-stroke:0.2px currentColor">03/04/2025<br>11:42</div>
<div class="abs" style="left:945px;top:527.0px;font-size:12.2px;line-height:16px;color:#2b2b2b;white-space:nowrap;-webkit-text-stroke:0.2px currentColor">Público</div>
<svg class="abs" style="left:1096px;top:527.8px" width="15" height="15" viewBox="0 0 15 15"><circle cx="7.5" cy="7.5" r="6.3" fill="none" stroke="#2F4BAA" stroke-width="1.5"/><path d="M3 12L12 3" stroke="#2F4BAA" stroke-width="1.5"/></svg><svg class="abs" style="left:1125px;top:527.5px" width="13" height="15" viewBox="0 0 13 15"><path d="M3.9 4.6V3.9A2.5 2.5 0 0 1 8.9 3.9V6.4" fill="none" stroke="#2F4BAA" stroke-width="1.5"/><rect x="1.75" y="6.35" width="9" height="7.8" rx="1" fill="none" stroke="#2F4BAA" stroke-width="1.5"/><circle cx="6.1" cy="10.2" r="1.15" fill="#2F4BAA"/></svg><svg class="abs" style="left:1157px;top:529.8px" width="5" height="13" viewBox="0 0 5 13"><circle cx="2.5" cy="2" r="1.5" fill="#2F4BAA"/><circle cx="2.5" cy="6.5" r="1.5" fill="#2F4BAA"/><circle cx="2.5" cy="11" r="1.5" fill="#2F4BAA"/></svg>
<div class="abs" style="left:253px;top:627px;width:927px;height:1px;background:#E6E7EA"></div><div class="abs" style="left:259px;top:589.0px;font-size:12.2px;line-height:16px;color:#2b2b2b;white-space:nowrap;-webkit-text-stroke:0.2px currentColor">A. Eltercero</div>
<div class="abs" style="left:357px;top:573.0px;font-size:12.2px;line-height:16px;color:#2b2b2b;white-space:nowrap;-webkit-text-stroke:0.2px currentColor">sebaspizaler+p<br>rueba19@gmail<br>.com</div>
<div class="abs" style="left:455px;top:589.0px;font-size:12.2px;line-height:16px;color:#3D56B0;white-space:nowrap;-webkit-text-stroke:0.2px currentColor">Eltercero, Abril</div>
<div class="abs" style="left:553px;top:589.0px;font-size:12.2px;line-height:16px;color:#2b2b2b;white-space:nowrap;-webkit-text-stroke:0.2px currentColor">18.285.882-k</div>
<div class="abs" style="left:651px;top:589.0px;font-size:12.2px;line-height:16px;color:#2b2b2b;white-space:nowrap;-webkit-text-stroke:0.2px currentColor">Normal</div>
<div class="abs" style="left:749px;top:581.0px;font-size:12.2px;line-height:16px;color:#2b2b2b;white-space:nowrap;-webkit-text-stroke:0.2px currentColor">03/04/2025<br>11:21</div>
<div class="abs" style="left:945px;top:589.0px;font-size:12.2px;line-height:16px;color:#2b2b2b;white-space:nowrap;-webkit-text-stroke:0.2px currentColor">Público</div>
<svg class="abs" style="left:1096px;top:589.8px" width="15" height="15" viewBox="0 0 15 15"><circle cx="7.5" cy="7.5" r="6.3" fill="none" stroke="#2F4BAA" stroke-width="1.5"/><path d="M3 12L12 3" stroke="#2F4BAA" stroke-width="1.5"/></svg><svg class="abs" style="left:1125px;top:589.5px" width="13" height="15" viewBox="0 0 13 15"><path d="M3.9 4.6V3.9A2.5 2.5 0 0 1 8.9 3.9V6.4" fill="none" stroke="#2F4BAA" stroke-width="1.5"/><rect x="1.75" y="6.35" width="9" height="7.8" rx="1" fill="none" stroke="#2F4BAA" stroke-width="1.5"/><circle cx="6.1" cy="10.2" r="1.15" fill="#2F4BAA"/></svg><svg class="abs" style="left:1157px;top:591.8px" width="5" height="13" viewBox="0 0 5 13"><circle cx="2.5" cy="2" r="1.5" fill="#2F4BAA"/><circle cx="2.5" cy="6.5" r="1.5" fill="#2F4BAA"/><circle cx="2.5" cy="11" r="1.5" fill="#2F4BAA"/></svg>
<div class="abs" style="left:253px;top:673px;width:927px;height:1px;background:#E6E7EA"></div><div class="abs" style="left:259px;top:644.0px;font-size:12.2px;line-height:16px;color:#2b2b2b;white-space:nowrap;-webkit-text-stroke:0.2px currentColor">Albert Orellano</div>
<div class="abs" style="left:357px;top:636.0px;font-size:12.2px;line-height:16px;color:#2b2b2b;white-space:nowrap;-webkit-text-stroke:0.2px currentColor">aorellano@buk.<br>cl</div>
<div class="abs" style="left:651px;top:644.0px;font-size:12.2px;line-height:16px;color:#2b2b2b;white-space:nowrap;-webkit-text-stroke:0.2px currentColor">Normal</div>
<div class="abs" style="left:749px;top:636.0px;font-size:12.2px;line-height:16px;color:#2b2b2b;white-space:nowrap;-webkit-text-stroke:0.2px currentColor">15/10/2024<br>10:00</div>
<div class="abs" style="left:945px;top:644.0px;font-size:12.2px;line-height:16px;color:#2b2b2b;white-space:nowrap;-webkit-text-stroke:0.2px currentColor">Ambos</div>
<svg class="abs" style="left:1096px;top:643.8px" width="15" height="15" viewBox="0 0 15 15"><circle cx="7.5" cy="7.5" r="6.3" fill="none" stroke="#2F4BAA" stroke-width="1.5"/><path d="M3 12L12 3" stroke="#2F4BAA" stroke-width="1.5"/></svg><svg class="abs" style="left:1125px;top:643.5px" width="13" height="15" viewBox="0 0 13 15"><path d="M3.9 4.6V3.9A2.5 2.5 0 0 1 8.9 3.9V6.4" fill="none" stroke="#C8C8C8" stroke-width="1.5"/><rect x="1.75" y="6.35" width="9" height="7.8" rx="1" fill="none" stroke="#C8C8C8" stroke-width="1.5"/><circle cx="6.1" cy="10.2" r="1.15" fill="#C8C8C8"/></svg><svg class="abs" style="left:1157px;top:645.8px" width="5" height="13" viewBox="0 0 5 13"><circle cx="2.5" cy="2" r="1.5" fill="#2F4BAA"/><circle cx="2.5" cy="6.5" r="1.5" fill="#2F4BAA"/><circle cx="2.5" cy="11" r="1.5" fill="#2F4BAA"/></svg>
<div class="abs" style="left:1195px;top:49px;width:5px;height:602px;background:#EEEFF4"></div><div class="abs" style="left:1195px;top:49px;width:5px;height:232px;background:#C2C2C4"></div><div class="abs" style="left:1154px;top:606px;width:32px;height:32px;border-radius:50%;background:#2F4BAA;box-shadow:0 1px 4px rgba(0,0,0,.3)"></div><svg class="abs" style="left:1164px;top:617px" width="13" height="9" viewBox="0 0 13 9"><rect x="0" y="0" width="13" height="6.5" rx="3.2" fill="#fff"/><path d="M8 6l2 2.5.3-2.5z" fill="#fff"/></svg>
<svg class="abs" style="left:627.8px;top:349.8px;z-index:20" width="20" height="30" viewBox="-1.5 -1.5 18 27" preserveAspectRatio="none"><path d="M0 0V17.8L4.2 13.9L7.1 21.3L10.9 19.8L8 12.8H13.2Z" fill="#000" stroke="#fff" stroke-width="1.6" stroke-linejoin="round"/></svg>
<svg class="abs" style="left:1190px;top:641px;z-index:30" width="10" height="10" viewBox="0 0 10 10"><path d="M10 0V10H0A10 10 0 0 0 10 0z" fill="#8a8a8a"/></svg>
<div class="abs" style="left:0;top:0;width:1px;height:651px;background:#3E58B5;z-index:30"></div>
</body></html>
